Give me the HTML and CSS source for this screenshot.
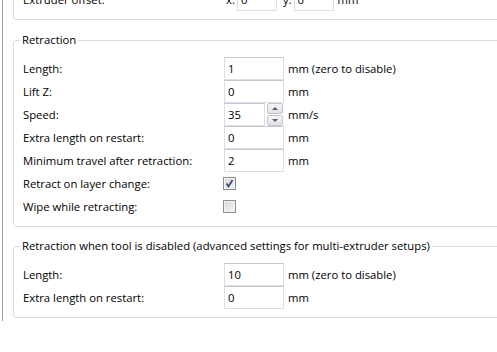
FILE: index.html
```html
<!DOCTYPE html>
<html lang="en">
<head>
    <meta charset="UTF-8">
    <title>Printer Settings - Extruder</title>
    <link rel="stylesheet" href="styles.css">
</head>
<body>

    <div class="page">

        <!-- Extruder offset (scrolled mostly out of view) -->
        <div class="group group-top">
            <div class="row">
                <span class="label">Extruder offset:</span>
                <span class="offset">
                    <span class="axis">x:</span>
                    <input class="field short" value="0">
                    <span class="axis axis-y">y:</span>
                    <input class="field short" value="0">
                    <span class="unit">mm</span>
                </span>
            </div>
        </div>

        <!-- Retraction -->
        <fieldset class="group">
            <legend>Retraction</legend>
            <div class="row">
                <span class="label">Length:</span>
                <input class="field" value="1">
                <span class="unit">mm (zero to disable)</span>
            </div>
            <div class="row">
                <span class="label">Lift Z:</span>
                <input class="field" value="0">
                <span class="unit">mm</span>
            </div>
            <div class="row">
                <span class="label">Speed:</span>
                <span class="spin">
                    <input class="field spin-field" value="35">
                    <span class="spin-buttons">
                        <span class="spin-btn"><span class="arrow up"></span></span>
                        <span class="spin-btn"><span class="arrow down"></span></span>
                    </span>
                </span>
                <span class="unit">mm/s</span>
            </div>
            <div class="row">
                <span class="label">Extra length on restart:</span>
                <input class="field" value="0">
                <span class="unit">mm</span>
            </div>
            <div class="row">
                <span class="label">Minimum travel after retraction:</span>
                <input class="field" value="2">
                <span class="unit">mm</span>
            </div>
            <div class="row">
                <span class="label">Retract on layer change:</span>
                <span class="check checked">
                    <svg width="11" height="11" viewBox="0 0 11 11"><path d="M2.5 5.5 L4.5 8.5 L8.5 2" fill="none" stroke="#34497f" stroke-width="1.7"/></svg>
                </span>
            </div>
            <div class="row">
                <span class="label">Wipe while retracting:</span>
                <span class="check"></span>
            </div>
        </fieldset>

        <!-- Retraction for disabled tool -->
        <fieldset class="group">
            <legend>Retraction when tool is disabled (advanced settings for multi-extruder setups)</legend>
            <div class="row">
                <span class="label">Length:</span>
                <input class="field" value="10">
                <span class="unit">mm (zero to disable)</span>
            </div>
            <div class="row">
                <span class="label">Extra length on restart:</span>
                <input class="field" value="0">
                <span class="unit">mm</span>
            </div>
        </fieldset>

    </div>

</body>
</html>
```

FILE: styles.css
```css
body {
    margin: 0;
    background-color: #fff;
    font-family: "Open Sans", "Noto Sans", sans-serif;
    font-size: 11.3px;
    color: #000;
    overflow: hidden;
}
.page {
    margin-left: 2px;
    border-left: 1px solid #a0a0a0;
    min-height: 352px;
    width: 560px;
}
.group {
    margin: 0 0 0 10px;
    padding: 9px 0 8px 9px;
    border: 1px solid #d9dde2;
    border-radius: 3px;
    min-inline-size: 0;
}
.group-top {
    margin-top: -31px;
    margin-bottom: 12px;
    padding-top: 18px;
}
fieldset.group {
    margin-bottom: 11px;
}
legend {
    padding: 0 2px;
    margin-left: -3px;
    line-height: 16px;
}
.row {
    display: grid;
    grid-template-columns: 201px auto 1fr;
    align-items: center;
    height: 23px;
}
.label {
    white-space: nowrap;
}
.field {
    box-sizing: border-box;
    width: 60px;
    height: 23px;
    margin: 0;
    padding: 0 3px;
    border: 1px solid #dcdfe5;
    border-top-color: #c4c8cf;
    font-family: inherit;
    font-size: 11.3px;
    color: #000;
    background-color: #fff;
}
.unit {
    padding-left: 4px;
}
.offset {
    display: flex;
    align-items: center;
    padding-left: 2px;
}
.axis {
    padding-right: 2px;
}
.axis-y {
    padding-left: 6px;
}
.field.short {
    width: 40px;
}
.spin {
    display: flex;
    align-items: center;
    width: 60px;
}
.spin-field {
    width: 41px;
}
.spin-buttons {
    display: flex;
    flex-direction: column;
    gap: 1px;
    margin-left: 2px;
}
.spin-btn {
    box-sizing: border-box;
    width: 16px;
    height: 11px;
    border: 1px solid #c3c6cc;
    border-radius: 2px;
    background: linear-gradient(#f6f6f6, #e2e2e2);
    display: flex;
    align-items: center;
    justify-content: center;
}
.arrow {
    width: 0;
    height: 0;
    border-left: 3px solid transparent;
    border-right: 3px solid transparent;
}
.arrow.up {
    border-bottom: 3px solid #51607a;
}
.arrow.down {
    border-top: 3px solid #51607a;
}
.check {
    box-sizing: border-box;
    width: 13px;
    height: 13px;
    margin-left: -1px;
    border: 1px solid #8f8f8f;
    background: linear-gradient(135deg, #d8d8d8, #f4f4f4);
    box-shadow: inset 0 0 0 1px #f2f2f2;
    display: flex;
    align-items: center;
    justify-content: center;
}
.check svg {
    display: block;
}
```
